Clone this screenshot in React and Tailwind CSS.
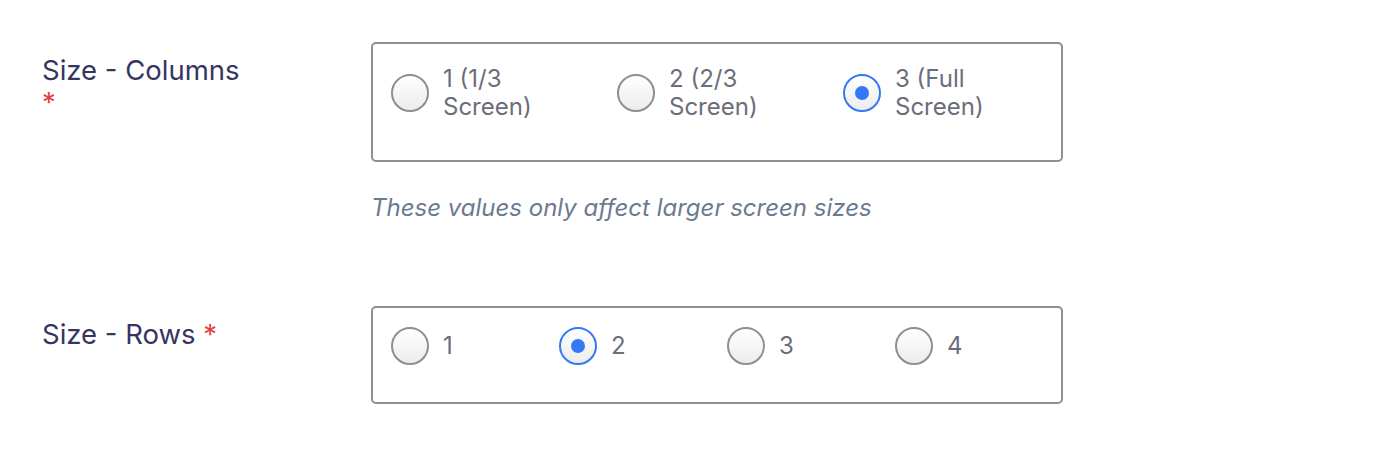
import React from "react";

const Radio = ({ checked }) => (
    <span
        className={
            "flex h-[38px] w-[38px] shrink-0 items-center justify-center rounded-full border-2 bg-gradient-to-b from-white to-[#ececec] " +
            (checked ? "border-[#3478f6]" : "border-[#8e8e93]")
        }
    >
        {checked && <span className="h-[14px] w-[14px] rounded-full bg-[#3478f6]" />}
    </span>
);

const Option = ({ label, checked, width, textWidth }) => (
    <label className={"flex shrink-0 items-center gap-[14px] " + width}>
        <Radio checked={checked} />
        <span className={"text-[24px] leading-[28px] text-[#6b6e7a] " + textWidth}>{label}</span>
    </label>
);

const Field = ({ label, children, help, wrapStar, boxPad }) => (
    <div className="flex">
        <div className="w-[329px] shrink-0 pt-[12px]">
            <div className="text-[27.5px] leading-[32px] text-[#35355f]">
                {label}
                {wrapStar ? (
                    <div className="text-[#e53e3e]">*</div>
                ) : (
                    <span className="text-[#e53e3e]"> *</span>
                )}
            </div>
        </div>
        <div>
            <div className={"flex w-[692px] overflow-hidden rounded-[5px] border-2 border-[#8e8e93] pl-[18px] " + boxPad}>
                {children}
            </div>
            {help && (
                <p className="mt-[32px] text-[24px] italic leading-[28px] text-[#6b7a90]">{help}</p>
            )}
        </div>
    </div>
);

const App = () => {
    const cols = ["1 (1/3 Screen)", "2 (2/3 Screen)", "3 (Full Screen)"];
    const rows = ["1", "2", "3", "4"];

    return (
        <div className="min-h-[464px] bg-white pl-[42px] pt-[42px] font-['Inter',sans-serif]">
            <Field
                label="Size - Columns"
                help="These values only affect larger screen sizes"
                wrapStar
                boxPad="pt-[21px] pb-[39px]"
            >
                {cols.map((c, i) => (
                    <Option key={c} label={c} checked={i === 2} width="w-[226px]" textWidth="w-[130px]" />
                ))}
            </Field>
            <div className="h-[84px]" />
            <Field label="Size - Rows" boxPad="pt-[19px] pb-[37px]">
                {rows.map((r, i) => (
                    <Option key={r} label={r} checked={i === 1} width="w-[168px]" textWidth="" />
                ))}
            </Field>
        </div>
    );
};

export default App;
